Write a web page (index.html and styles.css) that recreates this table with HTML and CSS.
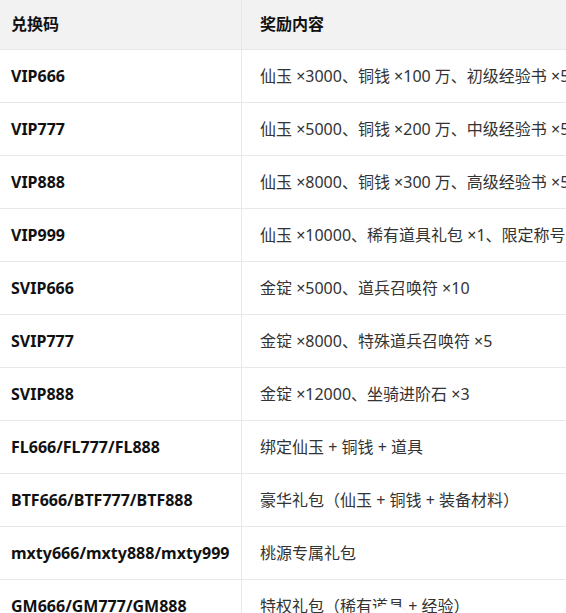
FILE: index.html
```html
<!DOCTYPE html>
<html lang="zh-CN">
<head>
<meta charset="utf-8">
<title>兑换码</title>
<link rel="stylesheet" href="styles.css">
</head>
<body>
<div class="wrap">
<table class="codes">
<thead>
<tr><th class="c1">兑换码</th><th class="c2">奖励内容</th></tr>
</thead>
<tbody>
<tr><td class="c1">VIP666</td><td class="c2">仙玉 ×3000、铜钱 ×100 万、初级经验书 ×5</td></tr>
<tr><td class="c1">VIP777</td><td class="c2">仙玉 ×5000、铜钱 ×200 万、中级经验书 ×5</td></tr>
<tr><td class="c1">VIP888</td><td class="c2">仙玉 ×8000、铜钱 ×300 万、高级经验书 ×5</td></tr>
<tr><td class="c1">VIP999</td><td class="c2">仙玉 ×10000、稀有道具礼包 ×1、限定称号</td></tr>
<tr><td class="c1">SVIP666</td><td class="c2">金锭 ×5000、道兵召唤符 ×10</td></tr>
<tr><td class="c1">SVIP777</td><td class="c2">金锭 ×8000、特殊道兵召唤符 ×5</td></tr>
<tr><td class="c1">SVIP888</td><td class="c2">金锭 ×12000、坐骑进阶石 ×3</td></tr>
<tr><td class="c1">FL666/FL777/FL888</td><td class="c2">绑定仙玉 + 铜钱 + 道具</td></tr>
<tr><td class="c1">BTF666/BTF777/BTF888</td><td class="c2">豪华礼包（仙玉 + 铜钱 + 装备材料）</td></tr>
<tr><td class="c1">mxty666/mxty888/mxty999</td><td class="c2">桃源专属礼包</td></tr>
<tr><td class="c1">GM666/GM777/GM888</td><td class="c2">特权礼包（稀有道具 + 经验）</td></tr>
</tbody>
</table>
</div>
<div class="fab"></div>
</body>
</html>
```
FILE: styles.css
```css
html, body {
  margin: 0;
  padding: 0;
  background: #fff;
  overflow: hidden;
}
body {
  font-family: "Noto Sans", "Noto Sans CJK SC", sans-serif;
  font-size: 16px;
  color: #333;
}
.wrap {
  width: 566px;
  overflow: hidden;
}
.codes {
  border-collapse: collapse;
  table-layout: fixed;
  width: 760px;
}
.codes th,
.codes td {
  text-align: left;
  white-space: nowrap;
  overflow: hidden;
  line-height: 24px;
  border-bottom: 1px solid #e8e8e8;
}
.codes th {
  background: #f2f2f2;
  color: #111;
  font-weight: bold;
  padding: 12px 18px 13px;
  height: 24px;
}
.codes td {
  padding: 14px 18px;
}
.codes .c1 {
  width: 212px;
  padding-left: 11px;
  border-right: 1px solid #e8e8e8;
}
.codes td.c1 {
  font-weight: bold;
  color: #111;
}
.fab {
  position: absolute;
  left: 366px;
  top: 604px;
  width: 46px;
  height: 46px;
  border-radius: 50%;
  background: #fff;
  box-shadow: 0 0 2px rgba(0,0,0,0.12);
}
```
